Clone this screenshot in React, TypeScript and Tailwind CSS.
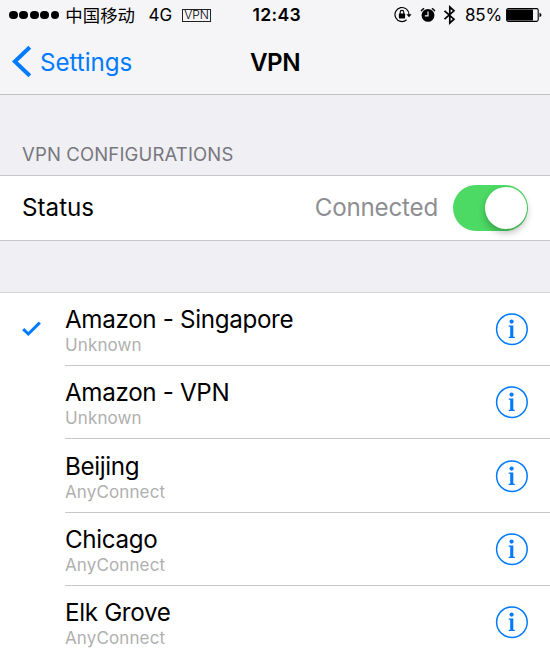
const SANS = "font-['Inter','Noto_Sans_CJK_SC',sans-serif]";

type Config = { name: string; kind: string; selected?: boolean; height: string };

const configs: Config[] = [
  { name: "Amazon - Singapore", kind: "Unknown", selected: true, height: "h-[73px]" },
  { name: "Amazon - VPN", kind: "Unknown", height: "h-[73px]" },
  { name: "Beijing", kind: "AnyConnect", height: "h-[74px] pt-px" },
  { name: "Chicago", kind: "AnyConnect", height: "h-[73px]" },
  { name: "Elk Grove", kind: "AnyConnect", height: "h-[73px]" },
];

function StatusBar() {
  return (
    <div className="grid h-[30px] grid-cols-[1fr_auto_1fr] items-center pr-2 pl-[9px] text-[17.6px] leading-[30px] text-black">
      <div className="flex items-center">
        <div className="flex gap-[1.6px]">
          {[0, 1, 2, 3, 4].map((n) => (
            <span key={n} className="h-[8.8px] w-[8.8px] rounded-full bg-black" />
          ))}
        </div>
        <span className="ml-[6px] font-['Noto_Sans_CJK_SC',sans-serif] text-[17.4px]">中国移动</span>
        <span className="ml-[13.5px] w-[24px] text-[17px]">4G</span>
        <span className="ml-[9.5px] flex h-[13px] w-[29px] items-center justify-center border border-[#222] text-[12px] leading-none font-light tracking-[-0.1px]">
          VPN
        </span>
      </div>
      <span className="w-[49px] pl-[1.5px] text-center font-semibold tracking-[0.3px] whitespace-nowrap">12:43</span>
      <div className="flex items-center justify-end">
        <svg width="18" height="18" viewBox="0 0 18 18" fill="none">
          <path d="M12.6 13.8A7 7 0 1 1 15 8.8" stroke="#000" strokeWidth="1.2" />
          <path d="M12.4 8.2H17.6L15 11.2Z" fill="#000" />
          <rect x="4.9" y="7.6" width="6.2" height="4.8" rx="0.6" fill="#000" />
          <path d="M6.2 8V6.2a1.8 1.8 0 0 1 3.6 0V8" stroke="#000" strokeWidth="1.1" />
        </svg>
        <svg className="ml-[8px]" width="16" height="16" viewBox="0 0 16 16" fill="none">
          <circle cx="8" cy="8.4" r="6.4" fill="#000" />
          <path d="M1.2 4.3Q1.9 2.1 4.2 1.5M14.8 4.3Q14.1 2.1 11.8 1.5" stroke="#000" strokeWidth="1.4" />
          <path d="M8 4.4V8.8H4.9" stroke="#f7f7f8" strokeWidth="1.2" />
        </svg>
        <svg className="ml-[7px]" width="14" height="20" viewBox="0 0 14 20" fill="none">
          <path d="M1.5 5.8L11 14.2L6.8 18V2L11 5.8L1.5 14.2" stroke="#000" strokeWidth="1.7" />
        </svg>
        <span className="ml-[8px] w-[36px] text-[17px] tracking-[-0.2px] whitespace-nowrap">85%</span>
        <svg className="ml-[5px]" width="36" height="14" viewBox="0 0 36 14" fill="none">
          <rect x="0.6" y="0.6" width="31.6" height="12.8" rx="1.6" stroke="#000" strokeWidth="1.1" />
          <rect x="1" y="1.6" width="26" height="10.8" rx="0.5" fill="#000" />
          <path d="M33.5 4.8Q35.5 5.5 35.5 7T33.5 9.2Z" fill="#000" />
        </svg>
      </div>
    </div>
  );
}

function NavBar() {
  return (
    <div className="grid h-[64px] grid-cols-[1fr_auto_1fr] items-center text-[24.2px] leading-[62px]">
      <div className="flex items-center text-[#007aff]">
        <svg className="ml-3" width="20" height="32" viewBox="0 0 20 32" fill="none">
          <path d="M17.8 1.2L2.8 15.5L17.8 29.8" stroke="currentColor" strokeWidth="4" />
        </svg>
        <span className="ml-[8px] pt-[2px] tracking-[-0.05px]">Settings</span>
      </div>
      <h1 className="w-[50px] pt-[2px] text-center font-semibold tracking-[-0.5px]">VPN</h1>
      <span />
    </div>
  );
}

function Toggle() {
  return (
    <div className="flex h-[46px] w-[75px] items-center justify-end rounded-full bg-[#4cd964] pr-[1.5px]">
      <span className="h-[42px] w-[42px] rounded-full bg-white shadow-[0_4px_7px_rgba(0,0,0,0.25)]" />
    </div>
  );
}

function InfoIcon() {
  return (
    <svg width="33" height="33" viewBox="0 0 33 33" fill="none">
      <circle cx="16.9" cy="16.2" r="15.3" stroke="#007aff" strokeWidth="1.5" />
      <circle cx="16.6" cy="8.6" r="2.1" fill="#007aff" />
      <path d="M13.7 12.6H18.3V23.8H19.8V25H13.7V23.8H15.2V13.8H13.7Z" fill="#007aff" />
    </svg>
  );
}

function ConfigRow({ config, last }: { config: Config; last: boolean }) {
  return (
    <div className={`flex ${config.height} shrink-0`}>
      <div className="w-[65px] shrink-0 pt-[28px] pl-[22px]">
        {config.selected && (
          <svg width="19" height="16" viewBox="0 0 19 16" fill="none">
            <path d="M1.2 8.2L6.3 13L17.8 1.6" stroke="#007aff" strokeWidth="3" />
          </svg>
        )}
      </div>
      <div className={`flex flex-1 justify-between ${last ? "" : "border-b border-[#c8c7cc]"}`}>
        <div className="pt-[11px]">
          <div className="text-[24.2px] leading-[31px] tracking-[-0.33px] text-black">{config.name}</div>
          <div className="text-[17px] leading-[21px] tracking-[0.12px] text-[#b0b0b0]">{config.kind}</div>
        </div>
        <div className="pt-[20px] pr-[22px]">
          <InfoIcon />
        </div>
      </div>
    </div>
  );
}

export default function App() {
  return (
    <div className={`flex h-[650px] w-[550px] flex-col overflow-hidden bg-[#efeff4] ${SANS}`}>
      <header className="h-[95px] shrink-0 border-b border-[#c0c0c5] bg-[#f5f5f7]">
        <StatusBar />
        <NavBar />
      </header>
      <h2 className="h-[80px] shrink-0 pt-[47px] pl-[22px] text-[18.5px] leading-6 tracking-[0.15px] text-[#77777c]">
        VPN CONFIGURATIONS
      </h2>
      <section className="flex h-[66px] shrink-0 items-center border-y border-[#c8c7cc] bg-white pr-[22px] pl-[22px] text-[24.2px]">
        <span className="flex-1 pt-px text-black">Status</span>
        <span className="mr-[15px] pt-px tracking-[-0.22px] text-[#8e8e93]">Connected</span>
        <Toggle />
      </section>
      <div className="h-[51px] shrink-0" />
      <section className="flex flex-1 flex-col border-t border-[#d4d4d9] bg-white">
        {configs.map((config, i) => (
          <ConfigRow key={config.name} config={config} last={i === configs.length - 1} />
        ))}
      </section>
    </div>
  );
}
